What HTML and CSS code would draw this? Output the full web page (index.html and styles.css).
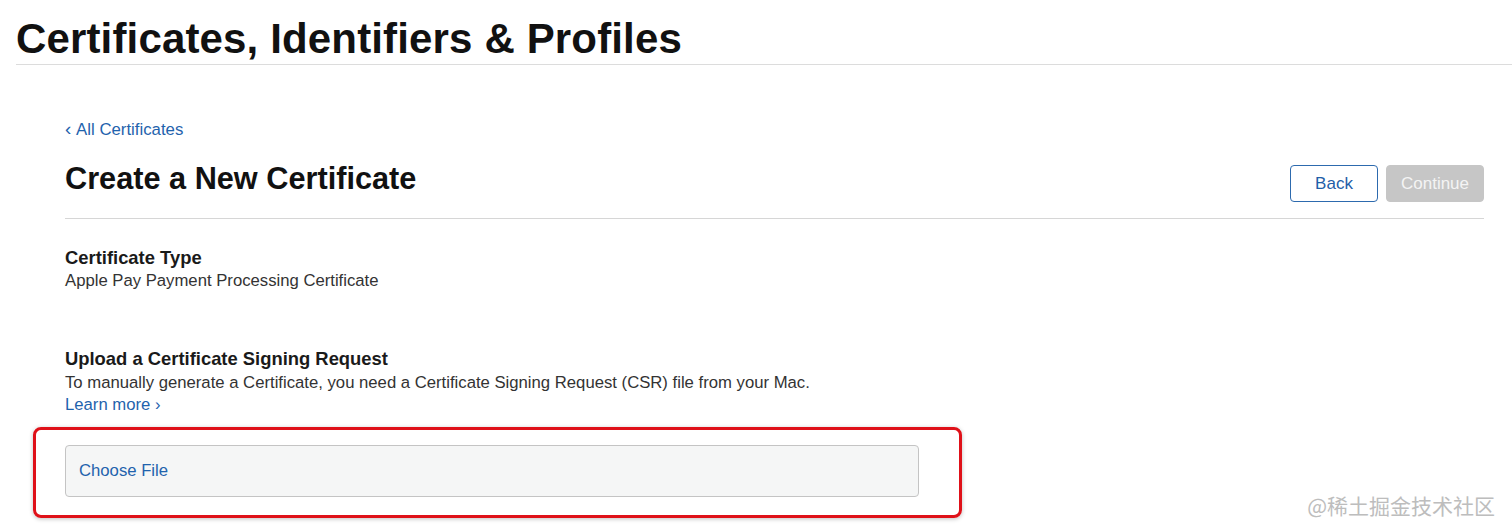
FILE: index.html
```html
<!DOCTYPE html>
<html lang="en">
<head>
<meta charset="utf-8">
<title>Certificates, Identifiers &amp; Profiles</title>
<link rel="stylesheet" href="styles.css">
</head>
<body>
  <header class="site-header">
    <h1 class="site-title">Certificates, Identifiers &amp; Profiles</h1>
  </header>
  <main class="content">
    <a class="back-link" href="#"><span class="chev">‹</span> All Certificates</a>
    <div class="title-row">
      <h2 class="page-title">Create a New Certificate</h2>
      <div class="actions">
        <button class="btn btn-back" type="button">Back</button>
        <button class="btn btn-continue" type="button" disabled>Continue</button>
      </div>
    </div>
    <section class="cert-type">
      <h3 class="section-title">Certificate Type</h3>
      <p class="body-text">Apple Pay Payment Processing Certificate</p>
    </section>
    <section class="upload">
      <h3 class="section-title">Upload a Certificate Signing Request</h3>
      <p class="body-text">To manually generate a Certificate, you need a Certificate Signing Request (CSR) file from your Mac.</p>
      <a class="body-text link" href="#">Learn more ›</a>
      <div class="file-wrap">
        <div class="file-box"><span class="file-label">Choose File</span></div>
        <div class="highlight"></div>
      </div>
    </section>
  </main>
  <div class="watermark">@稀土掘金技术社区</div>
</body>
</html>
```

FILE: styles.css
```css
* { box-sizing: border-box; }
html, body { margin: 0; padding: 0; background: #fff; }
body {
  font-family: "Liberation Sans", Arial, sans-serif;
  color: #333;
  width: 1512px;
  height: 532px;
  overflow: hidden;
  position: relative;
}
.site-header {
  margin: 14px 0 0 16px;
  border-bottom: 1px solid #dcdcdc;
}
.site-title {
  margin: 0;
  font-size: 42px;
  line-height: 50px;
  font-weight: 700;
  color: #111;
  letter-spacing: 0.15px;
}
.content {
  padding: 55px 28px 0 65px;
  display: flex;
  flex-direction: column;
}
.back-link {
  font-size: 16.8px;
  line-height: 20px;
  height: 20px;
  color: #1f63ad;
  text-decoration: none;
  align-self: flex-start;
}
.back-link .chev { font-size: 19px; line-height: 0; margin-right: 1px; }
.title-row {
  margin-top: 20px;
  display: flex;
  justify-content: space-between;
  align-items: flex-start;
  padding-bottom: 16px;
  border-bottom: 1px solid #d6d6d6;
}
.page-title {
  margin: 0;
  font-size: 30.7px;
  line-height: 37px;
  font-weight: 700;
  color: #111;
}
.actions {
  margin-top: 5px;
  display: flex;
  gap: 8px;
}
.btn {
  font-family: "Liberation Sans", Arial, sans-serif;
  font-size: 17px;
  height: 37px;
  border-radius: 4px;
  padding: 0;
}
.btn-back {
  width: 88px;
  background: #fff;
  border: 1px solid #2d6aae;
  color: #1f5ea8;
}
.btn-continue {
  width: 98px;
  background: #c6c6c6;
  border: 1px solid #c6c6c6;
  color: #f4f4f4;
}
.cert-type { padding-top: 28px; display: flex; flex-direction: column; }
.section-title {
  margin: 0;
  font-size: 18.4px;
  line-height: 22px;
  font-weight: 700;
  color: #1a1a1a;
}
.body-text {
  margin: 0;
  font-size: 16.7px;
  line-height: 22.5px;
  color: #333;
}
.cert-type .body-text { margin-top: 1px; }
.upload {
  margin-top: 55px;
  display: flex;
  flex-direction: column;
}
.upload .section-title { margin-bottom: 2px; }
.link { color: #1f63ad; text-decoration: none; align-self: flex-start; }
.file-wrap {
  position: relative;
  margin-top: 28px;
  width: 854px;
}
.file-box {
  height: 52px;
  background: #f5f6f6;
  border: 1px solid #c4c4c4;
  border-radius: 4px;
  padding: 0 13px;
  display: flex;
  align-items: center;
}
.file-label {
  font-size: 16.7px;
  line-height: 20px;
  color: #1f63ad;
}
.highlight {
  position: absolute;
  left: -32px;
  top: -18px;
  right: -43px;
  bottom: -21px;
  border: 3px solid #df1119;
  border-radius: 8px;
  box-shadow: 0 1px 4px rgba(0,0,0,0.25);
  pointer-events: none;
}
.watermark {
  position: absolute;
  right: 17px;
  bottom: 16px;
  font-family: "Noto Sans CJK SC", "Noto Sans", sans-serif;
  font-size: 21px;
  line-height: 22px;
  color: #bdbdbd;
}
```
